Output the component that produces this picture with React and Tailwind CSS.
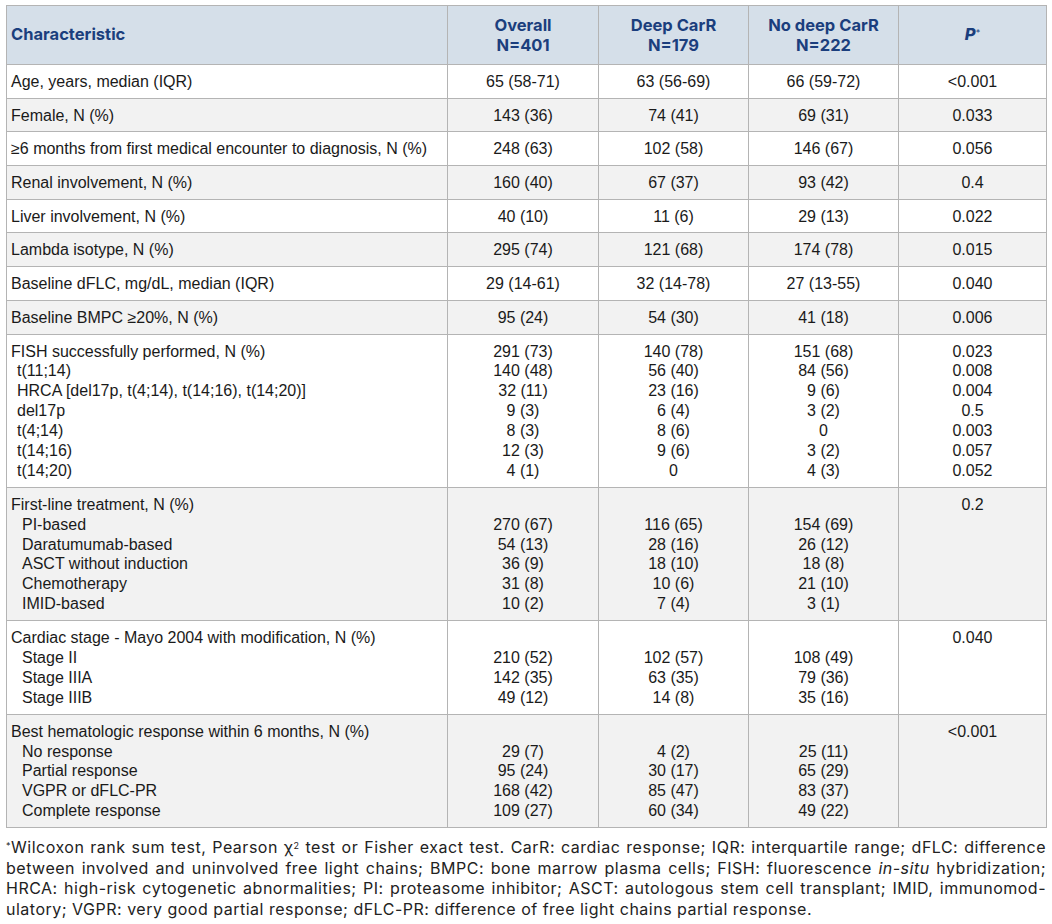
import React from "react";

const rows = [
  { l: ["Age, years, median (IQR)"], a: ["65 (58-71)"], b: ["63 (56-69)"], c: ["66 (59-72)"], p: "<0.001" },
  { l: ["Female, N (%)"], a: ["143 (36)"], b: ["74 (41)"], c: ["69 (31)"], p: "0.033" },
  { l: ["≥6 months from first medical encounter to diagnosis, N (%)"], a: ["248 (63)"], b: ["102 (58)"], c: ["146 (67)"], p: "0.056" },
  { l: ["Renal involvement, N (%)"], a: ["160 (40)"], b: ["67 (37)"], c: ["93 (42)"], p: "0.4" },
  { l: ["Liver involvement, N (%)"], a: ["40 (10)"], b: ["11 (6)"], c: ["29 (13)"], p: "0.022" },
  { l: ["Lambda isotype, N (%)"], a: ["295 (74)"], b: ["121 (68)"], c: ["174 (78)"], p: "0.015" },
  { l: ["Baseline dFLC, mg/dL, median (IQR)"], a: ["29 (14-61)"], b: ["32 (14-78)"], c: ["27 (13-55)"], p: "0.040" },
  { l: ["Baseline BMPC ≥20%, N (%)"], a: ["95 (24)"], b: ["54 (30)"], c: ["41 (18)"], p: "0.006" },
  {
    l: ["FISH successfully performed, N (%)", "t(11;14)", "HRCA [del17p, t(4;14), t(14;16), t(14;20)]", "del17p", "t(4;14)", "t(14;16)", "t(14;20)"],
    indent: "pl-[6px]",
    a: ["291 (73)", "140 (48)", "32 (11)", "9 (3)", "8 (3)", "12 (3)", "4 (1)"],
    b: ["140 (78)", "56 (40)", "23 (16)", "6 (4)", "8 (6)", "9 (6)", "0"],
    c: ["151 (68)", "84 (56)", "9 (6)", "3 (2)", "0", "3 (2)", "4 (3)"],
    pl: ["0.023", "0.008", "0.004", "0.5", "0.003", "0.057", "0.052"],
  },
  {
    l: ["First-line treatment, N (%)", "PI-based", "Daratumumab-based", "ASCT without induction", "Chemotherapy", "IMID-based"],
    indent: "pl-[11px]",
    a: ["", "270 (67)", "54 (13)", "36 (9)", "31 (8)", "10 (2)"],
    b: ["", "116 (65)", "28 (16)", "18 (10)", "10 (6)", "7 (4)"],
    c: ["", "154 (69)", "26 (12)", "18 (8)", "21 (10)", "3 (1)"],
    pl: ["0.2"],
  },
  {
    l: ["Cardiac stage - Mayo 2004 with modification, N (%)", "Stage II", "Stage IIIA", "Stage IIIB"],
    indent: "pl-[11px]",
    a: ["", "210 (52)", "142 (35)", "49 (12)"],
    b: ["", "102 (57)", "63 (35)", "14 (8)"],
    c: ["", "108 (49)", "79 (36)", "35 (16)"],
    pl: ["0.040"],
  },
  {
    l: ["Best hematologic response within 6 months, N (%)", "No response", "Partial response", "VGPR or dFLC-PR", "Complete response"],
    indent: "pl-[11px]",
    a: ["", "29 (7)", "95 (24)", "168 (42)", "109 (27)"],
    b: ["", "4 (2)", "30 (17)", "85 (47)", "60 (34)"],
    c: ["", "25 (11)", "65 (29)", "83 (37)", "49 (22)"],
    pl: ["<0.001"],
  },
];

function Lines({ items, center, multi }) {
  return (
    <div className={center ? "flex flex-col items-center" : "flex flex-col"}>
      {items.map((t, i) => (
        <div key={i} className={(multi ? "h-[19.9px]" : "h-[19.7px]") + " whitespace-nowrap"}>
          {t || "\u00a0"}
        </div>
      ))}
    </div>
  );
}

const cell = "border border-[#b4b4b4] align-top pt-[7px] pb-[6px]";

export default function App() {
  return (
    <div className="w-[1052px] h-[924px] bg-white overflow-hidden pt-[5px] pl-[6px]">
      <table
        className="table-fixed border-collapse w-[1040px] text-[16px] leading-[19.7px] text-[#1a1a1a]"
        style={{ fontFamily: '"Liberation Sans", Arial, sans-serif' }}
      >
        <colgroup>
          <col className="w-[441px]" />
          <col className="w-[151px]" />
          <col className="w-[150px]" />
          <col className="w-[150px]" />
          <col className="w-[148px]" />
        </colgroup>
        <thead>
          <tr className="bg-[#d5dfe9] text-[#1b3e7d]" style={{ fontFamily: 'Inter, "Liberation Sans", sans-serif' }}>
            <th className="border border-[#b4b4b4] h-[59px] text-left pl-[4px] font-bold text-[16.5px]">Characteristic</th>
            <th className="border border-[#b4b4b4] text-center font-bold text-[16.5px] leading-[20px]">
              Overall
              <br />
              N=401
            </th>
            <th className="border border-[#b4b4b4] text-center font-bold text-[16.5px] leading-[20px]">
              Deep CarR
              <br />
              N=179
            </th>
            <th className="border border-[#b4b4b4] text-center font-bold text-[16.5px] leading-[20px]">
              No deep CarR
              <br />
              N=222
            </th>
            <th className="border border-[#b4b4b4] text-center font-bold text-[16.5px]">
              <span className="italic font-extrabold">P</span>
              <sup className="text-[9px] font-normal">*</sup>
            </th>
          </tr>
        </thead>
        <tbody>
          {rows.map((r, i) => {
            const bg = i % 2 === 1 ? "bg-[#f2f2f2]" : "bg-white";
            const multi = r.l.length > 1;
            return (
              <tr key={i} className={bg}>
                <td className={cell + " pl-[4px]"}>
                  <div className="flex flex-col">
                    {r.l.map((t, j) => (
                      <div
                        key={j}
                        className={(multi ? "h-[19.9px] " : "h-[19.7px] ") + "whitespace-nowrap " + (j > 0 ? r.indent : "")}
                      >
                        {t}
                      </div>
                    ))}
                  </div>
                </td>
                <td className={cell}>
                  <Lines items={r.a} center multi={multi} />
                </td>
                <td className={cell}>
                  <Lines items={r.b} center multi={multi} />
                </td>
                <td className={cell}>
                  <Lines items={r.c} center multi={multi} />
                </td>
                <td className={cell}>
                  <Lines items={r.pl ? r.pl : [r.p]} center multi={multi} />
                </td>
              </tr>
            );
          })}
        </tbody>
      </table>
      <div
        className="w-[1040px] mt-[9px] text-[16px] tracking-[0.5px] leading-[20.5px] text-[#222]"
        style={{ fontFamily: 'Inter, "Liberation Sans", sans-serif' }}
      >
        <div className="text-justify [text-align-last:justify] whitespace-nowrap">
          <sup className="text-[9px]">*</sup>Wilcoxon rank sum test, Pearson χ<sup className="text-[9px]">2</sup> test or Fisher exact test. CarR: cardiac response; IQR: interquartile range; dFLC: difference
        </div>
        <div className="text-justify [text-align-last:justify] whitespace-nowrap">
          between involved and uninvolved free light chains; BMPC: bone marrow plasma cells; FISH: fluorescence <i>in-situ</i> hybridization;
        </div>
        <div className="text-justify [text-align-last:justify] whitespace-nowrap">
          HRCA: high-risk cytogenetic abnormalities; PI: proteasome inhibitor; ASCT: autologous stem cell transplant; IMID, immunomod-
        </div>
        <div className="whitespace-nowrap">ulatory; VGPR: very good partial response; dFLC-PR: difference of free light chains partial response.</div>
      </div>
    </div>
  );
}
